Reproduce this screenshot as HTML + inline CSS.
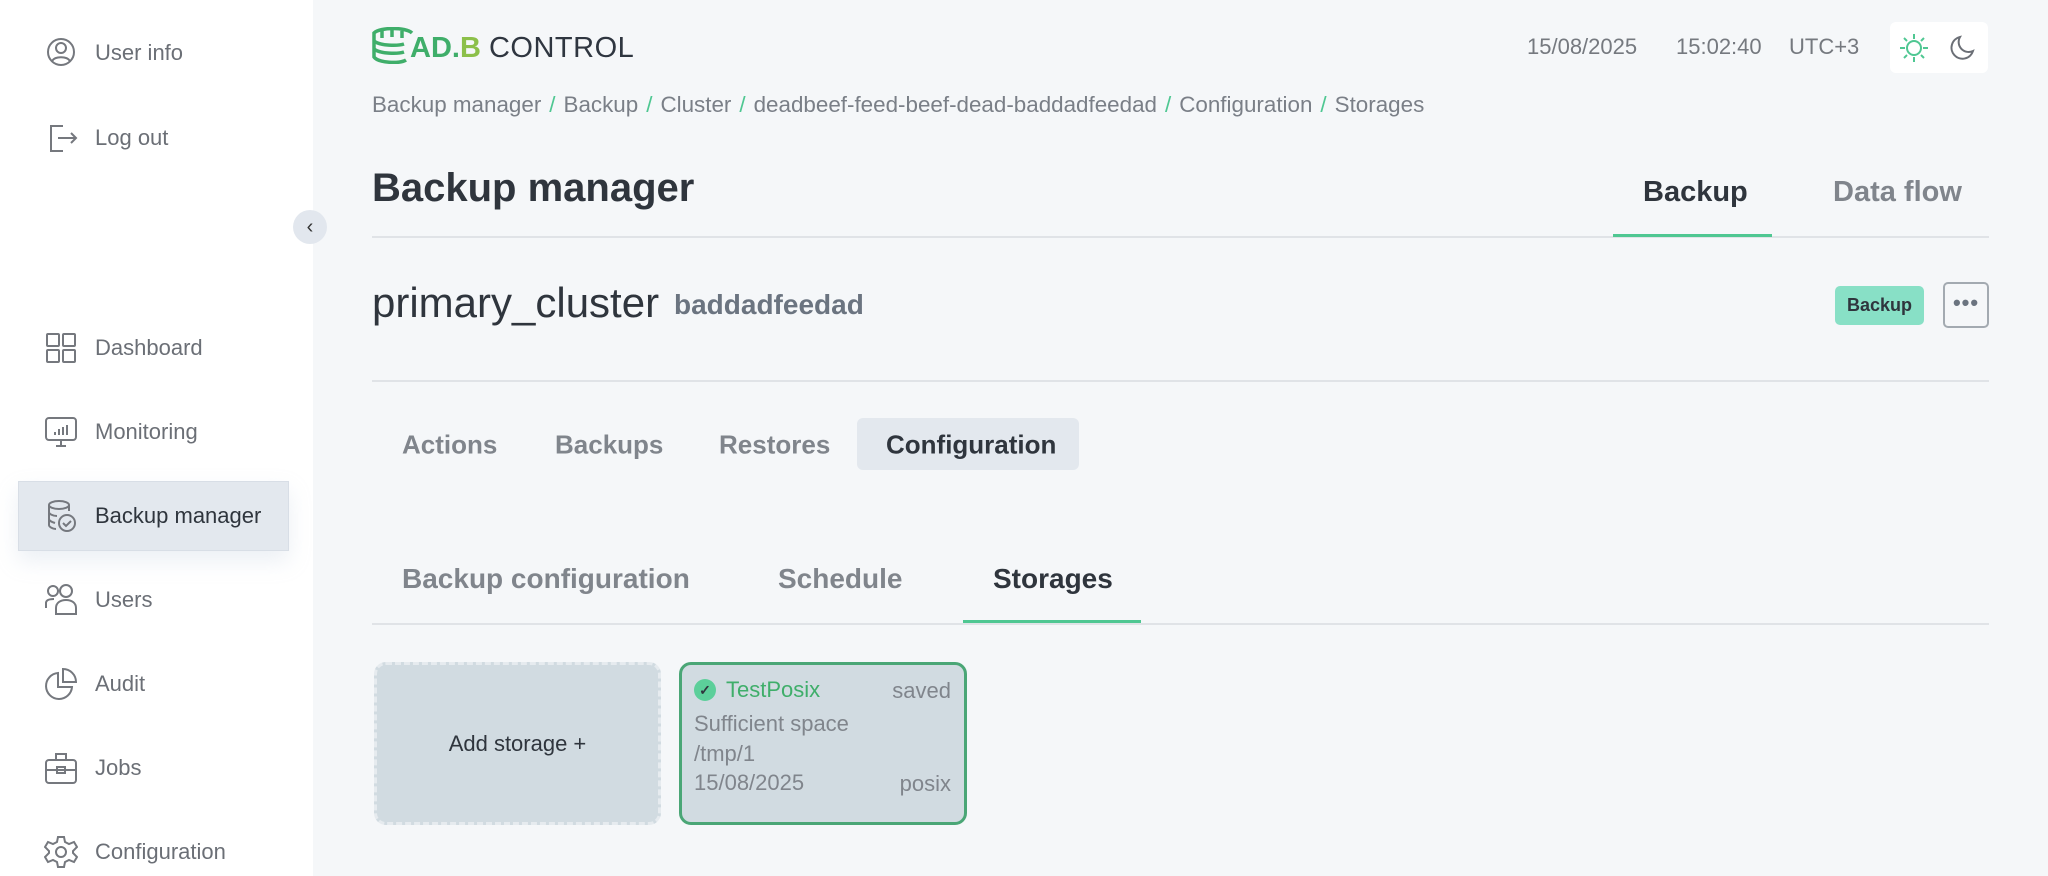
<!DOCTYPE html>
<html><head><meta charset="utf-8"><style>
*{margin:0;padding:0;box-sizing:border-box}
body{width:2048px;height:876px;background:#f5f7f9;font-family:"Liberation Sans",sans-serif;position:relative;overflow:hidden;color:#2f353d}
.a{position:absolute;white-space:nowrap}
#side{position:absolute;left:0;top:0;width:313px;height:876px;background:#fff}
.si{position:absolute;left:95px;font-size:22px;color:#6b6f76;transform:translateY(-50%)}
.ic{position:absolute;left:44px;width:34px;height:34px;transform:translateY(-50%)}
.bc{font-size:22.4px;color:#7a7f87}
.bc i{font-style:normal;color:#4fc792;margin:0 8px}
.t1{font-size:26px;font-weight:bold;color:#80858c;transform:translateY(-50%)}
.t2{font-size:28px;font-weight:bold;color:#80858c;transform:translateY(-50%)}
.card{position:absolute;top:662px;height:163px;border-radius:12px;background:#d1dbe1}
.ct{position:absolute;font-size:22px;color:#80858c;transform:translateY(-50%)}
</style></head><body>
<div id="side">
<svg class="ic" style="top:52px" viewBox="0 0 34 34" fill="none" stroke="#75787e" stroke-width="2"><circle cx="17" cy="17" r="13"/><circle cx="17" cy="13" r="5"/><path d="M8 26c3-5 15-5 18 0"/></svg>
<div class="si" style="top:53px">User info</div>
<svg class="ic" style="top:137px" viewBox="0 0 34 34" fill="none" stroke="#75787e" stroke-width="2"><path d="M19 6H7v25h12M14 18h18M27 13l5 5-5 5"/></svg>
<div class="si" style="top:138px">Log out</div>
<div style="position:absolute;left:293px;top:210px;width:34px;height:34px;border-radius:50%;background:#e2e7ee;font-size:20px;text-align:center;line-height:34px;color:#333">&#8249;</div>
<svg class="ic" style="top:348px" viewBox="0 0 34 34" fill="none" stroke="#75787e" stroke-width="2"><rect x="3" y="3" width="12" height="12" rx="1"/><rect x="19" y="3" width="12" height="12" rx="1"/><rect x="3" y="19" width="12" height="12" rx="1"/><rect x="19" y="19" width="12" height="12" rx="1"/></svg>
<div class="si" style="top:348px">Dashboard</div>
<svg class="ic" style="top:432px" viewBox="0 0 34 34" fill="none" stroke="#75787e" stroke-width="2"><rect x="2" y="3" width="30" height="22" rx="3"/><path d="M12 31h10M17 25v6M11 20v-3M15 20v-6M19 20v-8M23 20v-10"/></svg>
<div class="si" style="top:432px">Monitoring</div>
<div style="position:absolute;left:18px;top:481px;width:271px;height:70px;background:#e3e8ee;border:1px solid #d8dee6;box-shadow:0 10px 20px rgba(180,195,215,.25)"></div>
<svg class="ic" style="top:516px" viewBox="0 0 34 34" fill="none" stroke="#75787e" stroke-width="2"><ellipse cx="15" cy="6" rx="10" ry="4"/><path d="M5 6v20c0 2 4 4 7 4M25 6v6M5 13c0 2 4 4 8 4M5 20c0 2 3 3 6 4"/><circle cx="23" cy="24" r="8"/><path d="M19 24l3 3 5-5"/></svg>
<div class="si" style="top:516px;color:#2f353d">Backup manager</div>
<svg class="ic" style="top:600px" viewBox="0 0 34 34" fill="none" stroke="#75787e" stroke-width="2"><circle cx="9" cy="8" r="5"/><circle cx="22" cy="8" r="6"/><path d="M2 25v-5c0-3 3-4 8-4M12 31v-6c0-5 4-8 10-8s10 3 10 8v6z"/></svg>
<div class="si" style="top:600px">Users</div>
<svg class="ic" style="top:684px" viewBox="0 0 34 34" fill="none" stroke="#75787e" stroke-width="2"><path d="M14 6a13 13 0 1 0 14 14H14z"/><path d="M19 2v13h13A13 13 0 0 0 19 2z"/></svg>
<div class="si" style="top:684px">Audit</div>
<svg class="ic" style="top:768px" viewBox="0 0 34 34" fill="none" stroke="#75787e" stroke-width="2"><rect x="2" y="9" width="30" height="23" rx="3"/><path d="M12 9V3h10v6M2 19h30"/><rect x="13" y="16" width="8" height="6"/></svg>
<div class="si" style="top:768px">Jobs</div>
<svg class="ic" style="top:852px" viewBox="0 0 34 34" fill="none" stroke="#75787e" stroke-width="2"><circle cx="17" cy="17" r="5"/><path d="M14 2h6l1 5 4 2 5-2 3 5-4 4v2l4 4-3 5-5-2-4 2-1 5h-6l-1-5-4-2-5 2-3-5 4-4v-2l-4-4 3-5 5 2 4-2z"/></svg>
<div class="si" style="top:852px">Configuration</div>
</div>

<svg class="a" style="left:372px;top:27px" width="42" height="37" viewBox="0 0 42 37" fill="none" stroke="#3fae6a" stroke-width="3.5"><path d="M40 6C34 0 8 0 2 6v24c4 6 26 7 32 3"/><path d="M2 14c6 5 24 5 30 3M2 22c6 5 24 5 30 3M10 4v7M20 3v7M30 4v7"/></svg>
<div class="a" style="left:410px;top:31px;font-size:29px;line-height:34px;color:#2f3640;font-weight:bold"><span style="color:#3fae6a">AD.</span><span style="color:#8cc04a">B</span> <span style="font-weight:normal;letter-spacing:0.5px">CONTROL</span></div>

<div class="a" style="left:1527px;top:34px;font-size:22px;color:#75797f">15/08/2025</div>
<div class="a" style="left:1676px;top:34px;font-size:22px;color:#75797f">15:02:40</div>
<div class="a" style="left:1789px;top:34px;font-size:22px;color:#75797f">UTC+3</div>
<div class="a" style="left:1890px;top:22px;width:98px;height:51px;background:#fff;border-radius:6px"></div>
<svg class="a" style="left:1899px;top:33px" width="30" height="30" viewBox="0 0 30 30" fill="none" stroke="#4fc792" stroke-width="2"><circle cx="15" cy="15" r="7"/><path d="M15 1v5M15 24v5M1 15h5M24 15h5M5 5l3 3M22 22l3 3M5 25l3-3M22 8l3-3"/></svg>
<svg class="a" style="left:1950px;top:35px" width="26" height="26" viewBox="0 0 26 26" fill="none" stroke="#6b6f76" stroke-width="2"><path d="M10 2a11 11 0 1 0 13 14A10 10 0 0 1 10 2z"/></svg>

<div class="a bc" style="left:372px;top:92px">Backup manager<i>/</i>Backup<i>/</i>Cluster<i>/</i>deadbeef-feed-beef-dead-baddadfeedad<i>/</i>Configuration<i>/</i>Storages</div>

<div class="a" style="left:372px;top:166px;font-size:40px;font-weight:bold;color:#2f353d">Backup manager</div>
<div class="a" style="left:1643px;top:176px;font-size:29px;font-weight:bold;color:#2f353d">Backup</div>
<div class="a" style="left:1833px;top:176px;font-size:29px;font-weight:bold;color:#80858c">Data flow</div>
<div class="a" style="left:372px;top:236px;width:1617px;height:2px;background:#e0e3e7"></div>
<div class="a" style="left:1613px;top:234px;width:159px;height:3px;background:#4fc792"></div>

<div class="a" style="left:372px;top:279px;font-size:42px;color:#2f353d">primary_cluster</div>
<div class="a" style="left:674px;top:289px;font-size:28px;font-weight:bold;color:#6b7480">baddadfeedad</div>
<div class="a" style="left:1835px;top:286px;width:89px;height:39px;background:#88e0c6;border-radius:5px;font-size:18px;font-weight:bold;text-align:center;line-height:39px;color:#2f353d">Backup</div>
<div class="a" style="left:1943px;top:282px;width:46px;height:46px;border:2px solid #a3aab1;border-radius:5px;text-align:center;line-height:38px;font-size:22px;font-weight:bold;color:#6b7480;letter-spacing:1px">&#8226;&#8226;&#8226;</div>
<div class="a" style="left:372px;top:380px;width:1617px;height:2px;background:#e0e3e7"></div>

<div class="a" style="left:857px;top:418px;width:222px;height:52px;background:#e3e8ee;border-radius:6px"></div>
<div class="a t1" style="left:402px;top:445px">Actions</div>
<div class="a t1" style="left:555px;top:445px">Backups</div>
<div class="a t1" style="left:719px;top:445px">Restores</div>
<div class="a t1" style="left:886px;top:445px;color:#2f353d">Configuration</div>

<div class="a t2" style="left:402px;top:579px">Backup configuration</div>
<div class="a t2" style="left:778px;top:579px">Schedule</div>
<div class="a t2" style="left:993px;top:579px;color:#2f353d">Storages</div>
<div class="a" style="left:372px;top:623px;width:1617px;height:2px;background:#e0e3e7"></div>
<div class="a" style="left:963px;top:620px;width:178px;height:3px;background:#4fc792"></div>

<div class="card" style="left:374px;width:287px;border:3px dashed #e6ebef"></div>
<div class="a" style="left:374px;top:731px;width:287px;text-align:center;font-size:22px;color:#2f353d">Add storage +</div>
<div class="card" style="left:679px;width:288px;border:3px solid #4aa676"></div>
<div class="a" style="left:694px;top:679px;width:22px;height:22px;border-radius:50%;background:#5ccf9a;color:#2f353d;font-size:14px;text-align:center;line-height:22px;font-weight:bold">&#10003;</div>
<div class="ct" style="left:726px;top:690px;color:#3fae6a">TestPosix</div>
<div class="ct" style="right:1097px;top:691px">saved</div>
<div class="ct" style="left:694px;top:724px">Sufficient space</div>
<div class="ct" style="left:694px;top:754px">/tmp/1</div>
<div class="ct" style="left:694px;top:783px">15/08/2025</div>
<div class="ct" style="right:1097px;top:784px">posix</div>
</body></html>
